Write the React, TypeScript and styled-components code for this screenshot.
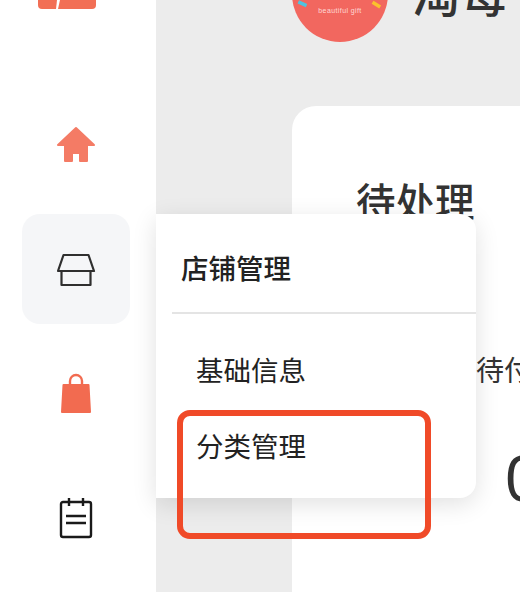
import React from "react";
import styled, {createGlobalStyle} from "styled-components";

const GlobalStyle = createGlobalStyle`
  html, body {
    margin: 0;
    padding: 0;
    background: #ececec;
  }

  body {
    font-family: "Noto Sans CJK SC", "Noto Sans", sans-serif;
  }
`

const Page = styled.div`
  position: relative;
  display: flex;
  width: 520px;
  height: 592px;
  overflow: hidden;
  background: #ececec;
`

const Sidebar = styled.aside`
  flex: 0 0 156px;
  display: flex;
  flex-direction: column;
  background: #fff;
`

const LogoCut = styled.svg`
  display: block;
  margin: 0 0 80px 38px;
`

const NavList = styled.nav`
  display: flex;
  flex-direction: column;
  gap: 15px;
  padding-left: 22px;
`

const NavItem = styled.div<{ $active?: boolean }>`
  display: flex;
  align-items: center;
  justify-content: center;
  width: 108px;
  height: 110px;
  border-radius: 18px;
  background: ${p => p.$active ? "#f5f6f8" : "transparent"};
`

const Main = styled.main`
  flex: 1;
  display: flex;
  flex-direction: column;
  min-width: 0;
  padding-left: 136px;
`

const Header = styled.header`
  flex: 0 0 106px;
  display: flex;
  align-items: flex-start;
  gap: 24px;
`

const Avatar = styled.svg`
  flex: 0 0 96px;
  display: block;
  margin-top: -54px;
`

const ShopName = styled.div`
  margin-top: -41px;
  font-size: 48px;
  line-height: 64px;
  font-weight: 500;
  color: #333;
  white-space: nowrap;
`

const Card = styled.section`
  flex: 1;
  padding: 56px 0 0 64px;
  background: #fff;
  border-radius: 24px 0 0 0;
  overflow: hidden;
`

const CardTitle = styled.h2`
  margin: 0;
  font-size: 39.5px;
  line-height: 76px;
  font-weight: 500;
  color: #333;
  white-space: nowrap;
`

const Stat = styled.div`
  width: 84px;
  margin: 111px 0 0 120px;
  text-align: center;
  white-space: nowrap;
`

const StatLabel = styled.div`
  font-size: 28px;
  line-height: 40px;
  color: #333;
`

const StatValue = styled.div`
  margin-top: 54px;
  padding-left: 10px;
  font-family: "Liberation Sans", sans-serif;
  font-size: 64px;
  line-height: 72px;
  color: #333;
`

const Popup = styled.div`
  position: absolute;
  left: 156px;
  top: 214px;
  width: 320px;
  height: 284px;
  background: #fff;
  border-radius: 0 16px 16px 0;
  box-shadow: 0 6px 24px rgba(0, 0, 0, .12);
`

const PopupTitle = styled.div`
  height: 98px;
  margin-left: 16px;
  padding-left: 9px;
  border-bottom: 2px solid #e4e4e4;
  font-size: 27.5px;
  line-height: 106px;
  font-weight: 500;
  color: #222;
`

const PopupList = styled.div`
  display: flex;
  flex-direction: column;
  gap: 36px;
  padding: 35px 0 0 40px;
`

const PopupLink = styled.div`
  font-size: 27.5px;
  line-height: 40px;
  color: #222;
`

const Highlight = styled.div`
  position: absolute;
  left: 177px;
  top: 410px;
  width: 254px;
  height: 129px;
  box-sizing: border-box;
  border: 6px solid #f04a28;
  border-radius: 13px;
`

const HomeIcon = () => (
    <svg width="44" height="44" viewBox="0 0 44 44">
        <path fill="#f47b65" stroke="#f47b65" strokeWidth="2" strokeLinejoin="round"
              d="M22 6 L40 23 H33 V39 H26 V31 H18 V39 H11 V23 H4 Z"/>
    </svg>
)

const StoreIcon = () => (
    <svg width="44" height="44" viewBox="0 0 44 44" fill="none" stroke="#2f2f2f" strokeWidth="2.2"
         strokeLinejoin="round">
        <path d="M9.500 8 H34.500 L40 24 H4 Z"/>
        <path d="M7.500 24 V38 H36.500 V24"/>
    </svg>
)

const BagIcon = () => (
    <svg width="44" height="44" viewBox="0 0 44 44">
        <path fill="none" stroke="#f26b50" strokeWidth="2.4" d="M16 13 V9 a6 6 0 0 1 12 0 V13"/>
        <path fill="#f26b50" d="M9.500 12 H34.500 a1 1 0 0 1 1 1 L37 40 a1 1 0 0 1 -1 1 H8 a1 1 0 0 1 -1 -1 L8.500 13 a1 1 0 0 1 1 -1 Z"/>
    </svg>
)

const NoteIcon = () => (
    <svg width="44" height="44" viewBox="0 0 44 44" fill="none" stroke="#1a1a1a" strokeWidth="2.4"
         strokeLinejoin="round">
        <rect x="7" y="5" width="30" height="35" rx="2"/>
        <path d="M15 1 V9 M29 1 V9"/>
        <path d="M12 19 H32 M12 26 H32"/>
    </svg>
)

const App: React.FC = () => {
    return (
        <Page>
            <GlobalStyle/>
            <Sidebar>
                <LogoCut width="58" height="9" viewBox="0 0 58 9">
                    <path fill="#f26f55" d="M0 0 H19 L18 9 H4 a4 4 0 0 1 -4 -4 Z"/>
                    <path fill="#f26f55" d="M22 0 H58 V5 a4 4 0 0 1 -4 4 H20 Z"/>
                </LogoCut>
                <NavList>
                    <NavItem><HomeIcon/></NavItem>
                    <NavItem $active><StoreIcon/></NavItem>
                    <NavItem><BagIcon/></NavItem>
                    <NavItem><NoteIcon/></NavItem>
                </NavList>
            </Sidebar>
            <Main>
                <Header>
                    <Avatar width="96" height="96" viewBox="0 0 96 96">
                        <circle cx="48" cy="48" r="48" fill="#f2675f"/>
                        <rect x="6" y="56" width="9" height="3.500" fill="#4fc3e0" transform="rotate(24 10.500 57.500)"/>
                        <rect x="80" y="57" width="9" height="3.500" fill="#fbc02d" transform="rotate(32 84.500 58.500)"/>
                        <text x="48" y="67" textAnchor="middle" fontSize="7" letterSpacing=".4" fill="#ffd9d6"
                              fontFamily="Liberation Sans, sans-serif">beautiful gift</text>
                    </Avatar>
                    <ShopName>淘每</ShopName>
                </Header>
                <Card>
                    <CardTitle>待处理</CardTitle>
                    <Stat>
                        <StatLabel>待付款</StatLabel>
                        <StatValue>0</StatValue>
                    </Stat>
                </Card>
            </Main>
            <Popup>
                <PopupTitle>店铺管理</PopupTitle>
                <PopupList>
                    <PopupLink>基础信息</PopupLink>
                    <PopupLink>分类管理</PopupLink>
                </PopupList>
            </Popup>
            <Highlight/>
        </Page>
    )
}

export default App
